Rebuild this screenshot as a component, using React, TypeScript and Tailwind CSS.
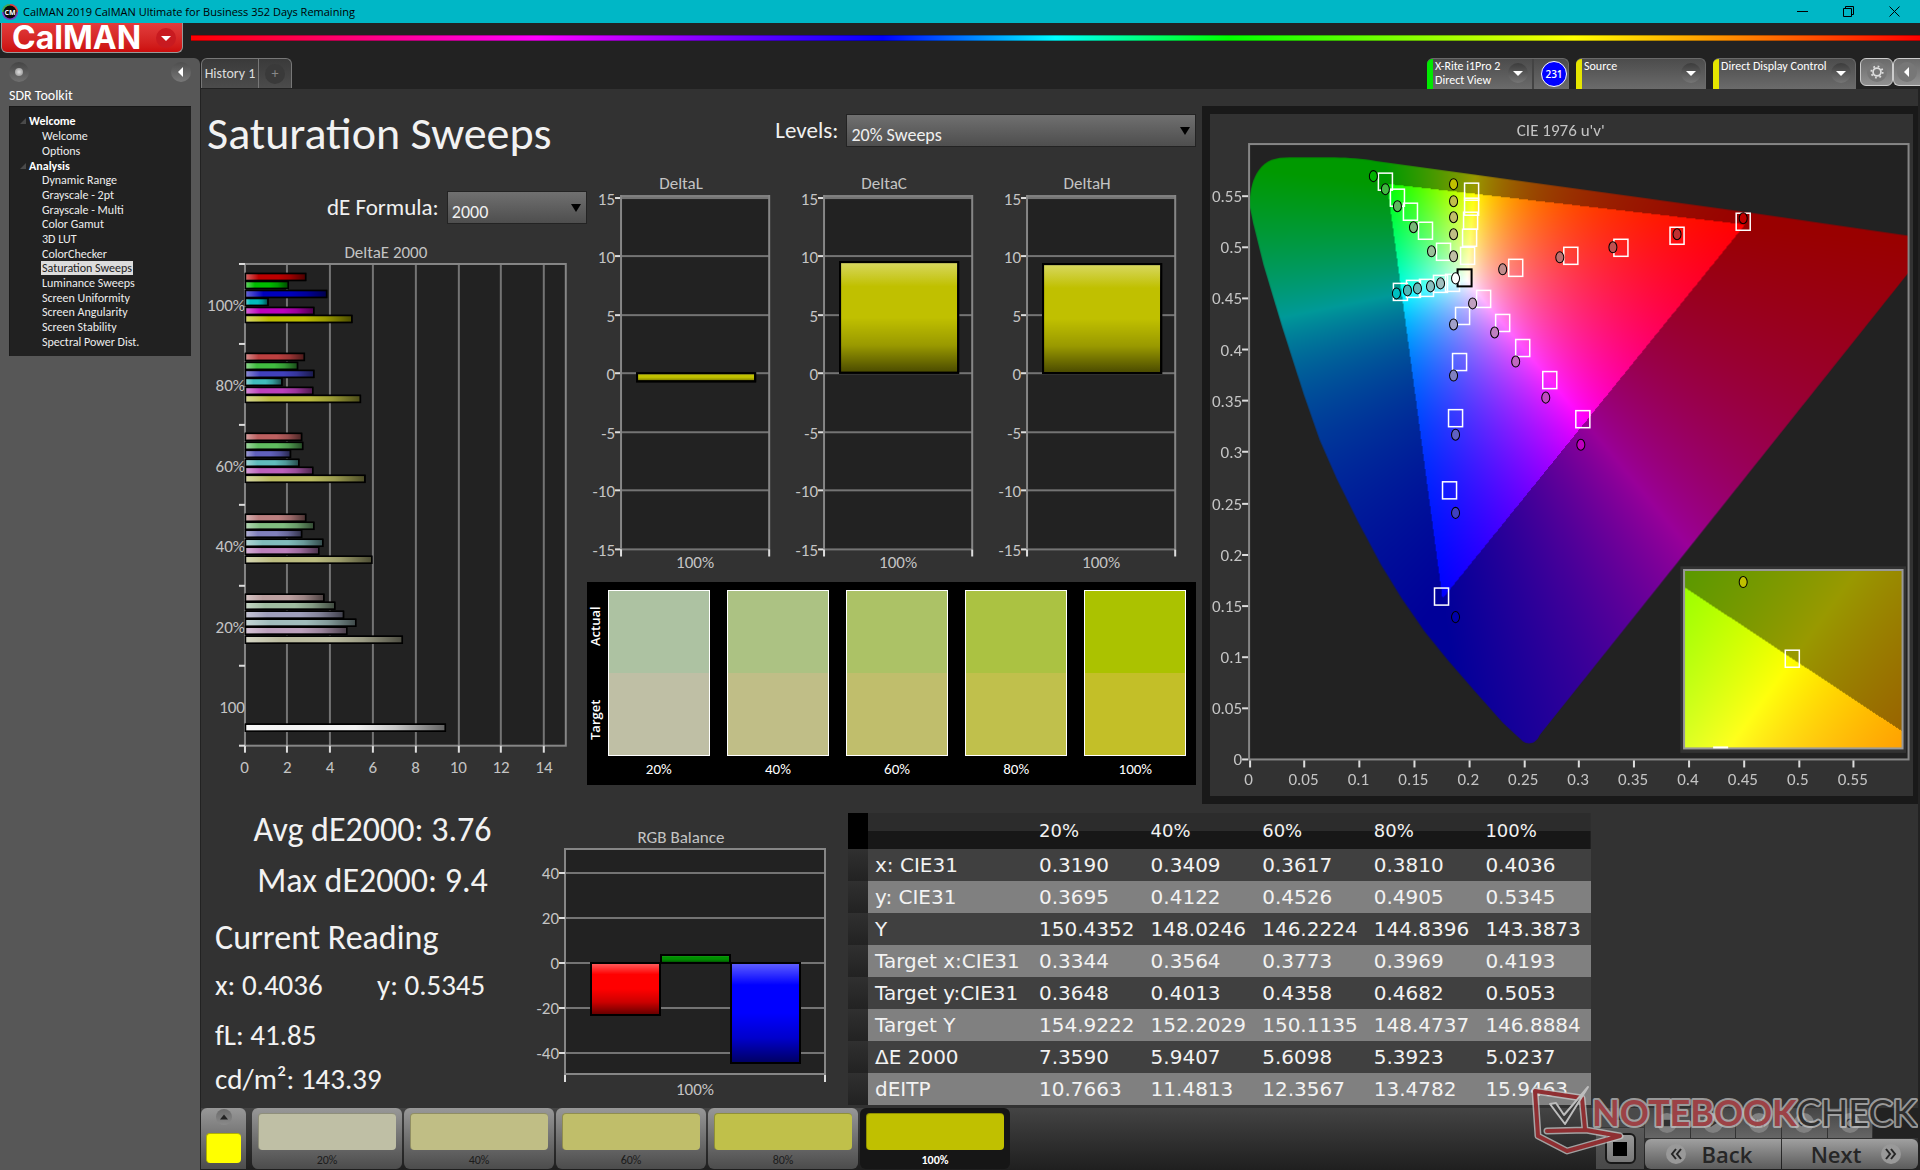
import React, { useLayoutEffect, useRef } from "react";

const SWEEPS = ["20%", "40%", "60%", "80%", "100%"];

const TREE: { title: string; items: string[] }[] = [
  { title: "Welcome", items: ["Welcome", "Options"] },
  {
    title: "Analysis",
    items: [
      "Dynamic Range",
      "Grayscale - 2pt",
      "Grayscale - Multi",
      "Color Gamut",
      "3D LUT",
      "ColorChecker",
      "Saturation Sweeps",
      "Luminance Sweeps",
      "Screen Uniformity",
      "Screen Angularity",
      "Screen Stability",
      "Spectral Power Dist.",
    ],
  },
];

const ROWS: [string, string[]][] = [
  ["x: CIE31", ["0.3190", "0.3409", "0.3617", "0.3810", "0.4036"]],
  ["y: CIE31", ["0.3695", "0.4122", "0.4526", "0.4905", "0.5345"]],
  ["Y", ["150.4352", "148.0246", "146.2224", "144.8396", "143.3873"]],
  ["Target x:CIE31", ["0.3344", "0.3564", "0.3773", "0.3969", "0.4193"]],
  ["Target y:CIE31", ["0.3648", "0.4013", "0.4358", "0.4682", "0.5053"]],
  ["Target Y", ["154.9222", "152.2029", "150.1135", "148.4737", "146.8884"]],
  ["ΔE 2000", ["7.3590", "5.9407", "5.6098", "5.3923", "5.0237"]],
  ["dEITP", ["10.7663", "11.4813", "12.3567", "13.4782", "15.9463"]],
];

/* ---------- small controls ---------- */

function Caret({ dir = "down", className = "" }: { dir?: "down" | "left" | "up"; className?: string }) {
  const d = dir === "down" ? "M5 8h10l-5 5z" : dir === "left" ? "M12 5v10l-5-5z" : "M5 12h10l-5-5z";
  return (
    <span className={"flex size-5 shrink-0 items-center justify-center rounded-full " + className}>
      <svg viewBox="0 0 20 20" className="size-5" fill="currentColor">
        <path d={d} />
      </svg>
    </span>
  );
}

function Select({ id, value, className }: { id: string; value: string; className: string }) {
  return (
    <span className={"relative block h-[33px] " + className}>
      <select
        id={id}
        defaultValue={value}
        className="h-full w-full appearance-none border border-[#232323] bg-linear-to-b from-[#707070] to-[#4e4e4e] pt-2 pl-1 text-[18px] leading-6 text-[#f0f0f0]"
      >
        <option>{value}</option>
      </select>
      <svg viewBox="0 0 10 8" className="pointer-events-none absolute top-[13px] right-1.5 h-2 w-2.5">
        <path d="M0 0h10L5 8z" fill="#000" />
      </svg>
    </span>
  );
}

function Device({ lines, color, badge, className }: { lines: string[]; color: string; badge?: string; className: string }) {
  return (
    <div className={"flex h-[31px] overflow-hidden rounded-t-md border-t border-r border-[#6a6a6a] bg-linear-to-b from-[#4c4c4c] to-[#6b6b6b] " + className}>
      <span className={"w-1.5 shrink-0 " + color} />
      <button className="flex flex-1 items-start justify-between pr-1 pl-0.5 text-left text-[12px] leading-[14px] text-white">
        <span className="whitespace-nowrap">
          {lines.map((l) => (
            <span key={l} className="block">
              {l}
            </span>
          ))}
        </span>
        <Caret className="mt-1 bg-linear-to-b from-[#3c3c3c] to-[#757575]" />
      </button>
      {badge && (
        <span className="flex w-9 shrink-0 items-center justify-end border-l-2 border-[#444] pr-px">
          <button className="size-[26px] rounded-full border border-white bg-[#0000ff] font-['Open_Sans'] text-[10px] font-semibold text-white">{badge}</button>
        </span>
      )}
    </div>
  );
}

/* ---------- charts ---------- */

const label = "fill-[#c4c4c4] text-[17px]";

function Shades() {
  return (
    <defs>
      <linearGradient id="sheen-h">
        <stop offset="0" stopColor="#fff" stopOpacity="0.4" />
        <stop offset="0.22" stopColor="#fff" stopOpacity="0" />
        <stop offset="0.55" stopColor="#000" stopOpacity="0" />
        <stop offset="0.75" stopColor="#000" stopOpacity="0.18" />
        <stop offset="1" stopColor="#000" stopOpacity="0.6" />
      </linearGradient>
      <linearGradient id="sheen-v" x2="0" y2="1">
        <stop offset="0" stopColor="#fff" stopOpacity="0.38" />
        <stop offset="0.22" stopColor="#fff" stopOpacity="0" />
        <stop offset="0.5" stopColor="#000" stopOpacity="0" />
        <stop offset="0.75" stopColor="#000" stopOpacity="0.2" />
        <stop offset="1" stopColor="#000" stopOpacity="0.62" />
      </linearGradient>
    </defs>
  );
}

const lows = [0, 64, 96, 128, 160];
const hues = [
  [1, 0, 0],
  [0, 1, 0],
  [0, 0, 1],
  [0, 1, 1],
  [1, 0, 1],
  [1, 1, 0],
];
const deltaE: { name: string; values: number[] }[] = [
  { name: "100%", values: [2.86, 2.05, 3.84, 1.1, 3.24, 5.02] },
  { name: "80%", values: [2.8, 2.48, 3.24, 1.75, 3.19, 5.42] },
  { name: "60%", values: [2.67, 2.72, 2.15, 2.54, 3.19, 5.63] },
  { name: "40%", values: [2.86, 3.24, 2.67, 3.66, 3.47, 5.95] },
  { name: "20%", values: [3.71, 4.22, 4.63, 5.2, 4.78, 7.38] },
];
const UNIT = 21.4;
const BAND = 80.4;

function DeltaEChart() {
  return (
    <svg viewBox="201 240 386 540" className="mt-4 block w-full" role="img" aria-label="DeltaE 2000">
      <Shades />
      <text x="386" y="258" textAnchor="middle" className={label}>
        DeltaE 2000
      </text>
      <rect x="245" y="264" width="321" height="482" fill="#222" />
      {[2, 4, 6, 8, 10, 12, 14].map((v) => (
        <rect key={v} x={Math.round(244.5 + v * UNIT) - 1} y="264" width="2" height="482" fill="#747474" />
      ))}
      <rect x="245" y="264" width="321" height="482" fill="none" stroke="#868686" strokeWidth="2" />
      {[0, 1, 2, 3, 4, 5, 6].map((i) => (
        <rect key={i} x="239" y={Math.round(263 + i * BAND)} width="6" height="2" fill="#ddd" />
      ))}
      {[0, 2, 4, 6, 8, 10, 12, 14].map((v) => (
        <g key={v}>
          <rect x={Math.round(244.5 + v * UNIT) - 1} y="746" width="2" height="7" fill="#ddd" />
          <text x={244.5 + v * UNIT} y="773" textAnchor="middle" className={label}>
            {v}
          </text>
        </g>
      ))}
      {[...deltaE.map((d) => d.name), "100"].map((n, i) => (
        <text key={n} x="245" y={Math.round(311 + i * BAND)} textAnchor="end" className={label}>
          {n}
        </text>
      ))}
      {deltaE.map((d, g) =>
        d.values.map((v, k) => {
          const y = Math.round(273 + g * 80.2 + k * 8.4) + 0.5;
          const fill = `rgb(${hues[k].map((h) => (h ? 188 : lows[g])).join(",")})`;
          return (
            <g key={g + "-" + k} stroke="#000" strokeWidth="1.4">
              <rect x="245.5" y={y} width={v * UNIT - 1} height="7" fill={fill} />
              <rect x="245.5" y={y} width={v * UNIT - 1} height="7" fill="url(#sheen-h)" />
            </g>
          );
        }),
      )}
      <g stroke="#000" strokeWidth="1.4">
        <rect x="245.5" y="724.5" width="200" height="7" fill="#f2f2f2" />
        <rect x="245.5" y="724.5" width="200" height="7" fill="url(#sheen-h)" />
      </g>
    </svg>
  );
}

function SignedChart({ title, value }: { title: string; value: number }) {
  const y = (v: number) => Math.round(373 - v * 11.7);
  return (
    <svg viewBox="587 170 203 402" className="block w-full" role="img" aria-label={title}>
      <text x="681" y="189" textAnchor="middle" className={label}>
        {title}
      </text>
      <rect x="621" y="196" width="148" height="353" fill="#222" />
      <rect x="621" y="195" width="148" height="4" fill="#808080" />
      {[15, 10, 5, 0, -5, -10, -15].map((v) => (
        <g key={v}>
          <rect x="621" y={y(v) - 1} width="148" height="2" fill="#747474" />
          <rect x="615" y={y(v) - 1} width="6" height="2" fill="#ddd" />
          <text x="615" y={y(v) + 7} textAnchor="end" className={label}>
            {v}
          </text>
        </g>
      ))}
      <path d="M621 195V549M769 195V549" stroke="#868686" strokeWidth="2" />
      <path d="M621 549v7M769 549v7" stroke="#ddd" strokeWidth="2" />
      <g stroke="#000" strokeWidth="2">
        <rect x="637" y={Math.min(y(value), 373)} width="118" height={Math.abs(value * 11.7)} fill="#c0c000" />
        <rect x="637" y={Math.min(y(value), 373)} width="118" height={Math.abs(value * 11.7)} fill="url(#sheen-v)" />
      </g>
      <text x="695" y="568" textAnchor="middle" className={label}>
        100%
      </text>
    </svg>
  );
}

function RgbChart() {
  const y = (v: number) => Math.round(964 - v * 2.25);
  const bars = [
    { x: 591, top: 964, h: 52, fill: "#ff0000" },
    { x: 661, top: 956, h: 8, fill: "#009000" },
    { x: 731, top: 964, h: 100, fill: "#0000ff" },
  ];
  return (
    <svg viewBox="530 815 318 290" className="block w-full" role="img" aria-label="RGB Balance">
      <text x="681" y="844" textAnchor="middle" className={label}>
        RGB Balance
      </text>
      <rect x="565" y="850" width="260" height="225" fill="#222" stroke="#868686" strokeWidth="2" />
      {[40, 20, 0, -20, -40].map((v) => (
        <g key={v}>
          <rect x="566" y={y(v) - 1} width="258" height="2" fill="#747474" />
          <rect x="559" y={y(v) - 1} width="6" height="2" fill="#ddd" />
          <text x="559" y={y(v) + 6} textAnchor="end" className={label}>
            {v}
          </text>
        </g>
      ))}
      <path d="M565 1076v7M825 1076v7" stroke="#ddd" strokeWidth="2" />
      {bars.map((b) => (
        <g key={b.x} stroke="#000" strokeWidth="2">
          <rect x={b.x} y={b.top} width="69" height={b.h} fill={b.fill} />
          <rect x={b.x} y={b.top} width="69" height={b.h} fill="url(#sheen-v)" />
        </g>
      ))}
      <text x="695" y="1096" textAnchor="middle" className={label}>
        100%
      </text>
    </svg>
  );
}

/* ---------- chromaticity diagram ---------- */

const HULL =
  "M1250.5 205C1251 188 1254 178 1259.7 170C1267 160 1276 157.3 1290 157.3L1335 157.3C1350 157.6 1362 158.5 1376.8 161L1745 211.7L1908 235.4V271.5L1682 555L1539.8 733C1536 742.5 1528 743 1523 739.5L1503 721L1475.5 690L1447.9 658.3L1425 630L1402 596.7L1381.4 563.3L1358.4 520L1337.7 478.3L1320.8 440L1304.7 394L1282.6 325L1264.3 264L1254.2 223.3Z";

function chroma(x: number, y: number): [number, number, number] {
  const X = x / y;
  const Z = (1 - x - y) / y;
  const lin = [3.2406 * X - 1.5372 - 0.4986 * Z, -0.9689 * X + 1.8758 + 0.0415 * Z, 0.0557 * X - 0.204 + 1.057 * Z];
  const dim = Math.min(...lin) < 0 ? 0.6 : 1;
  const max = Math.max(...lin);
  return lin.map((c) => (255 * dim * Math.max(0, c)) / max) as [number, number, number];
}

function paint(w: number, h: number, toXy: (px: number, py: number) => [number, number]) {
  const c = document.createElement("canvas");
  c.width = w;
  c.height = h;
  const g = c.getContext("2d")!;
  const img = g.createImageData(w, h);
  for (let j = 0; j < h; j++)
    for (let i = 0; i < w; i++) {
      const [x, y] = toXy(i, j);
      const rgb = y > 0 ? chroma(x, y) : [0, 0, 0];
      const o = (j * w + i) * 4;
      img.data[o] = rgb[0];
      img.data[o + 1] = rgb[1];
      img.data[o + 2] = rgb[2];
      img.data[o + 3] = 255;
    }
  g.putImageData(img, 0, 0);
  return c;
}

type Pt = [number, number];
const TARGETS: Pt[] = [
  [1386, 181], [1398, 197], [1411, 211], [1426, 230], [1444, 251],
  [1472, 191], [1472, 206], [1471, 220], [1470, 237], [1468, 255],
  [1516, 267], [1571, 255], [1621, 247], [1677, 235], [1743, 221],
  [1484, 298], [1503, 322], [1523, 347], [1550, 379], [1583, 418],
  [1463, 315], [1460, 361], [1456, 417], [1450, 489], [1442, 595],
  [1401, 291], [1414, 288], [1427, 287], [1441, 283], [1453, 282],
];
const ACTUALS: [number, number, string][] = [
  [1374, 176, "#00b400"], [1386, 189, "#40b840"], [1398, 206, "#5fb85f"], [1414, 227, "#78b878"], [1432, 251, "#98c098"],
  [1454, 184, "#c0c000"], [1454, 201, "#c0c04a"], [1454, 217, "#c0be6a"], [1454, 234, "#c0be85"], [1454, 256, "#bfbfa5"],
  [1503, 269, "#c08c8c"], [1560, 257, "#bc7070"], [1613, 247, "#c05050"], [1677, 234, "#c03030"], [1743, 218, "#c00000"],
  [1473, 303, "#c0a0c0"], [1495, 332, "#c080c0"], [1516, 361, "#c068c0"], [1546, 397, "#c048c0"], [1581, 444, "#c000c0"],
  [1454, 324, "#a0a0c8"], [1454, 375, "#8080c0"], [1456, 434, "#6060c0"], [1456, 512, "#4040c0"], [1456, 616, "#0000a8"],
  [1397, 293, "#00c0c0"], [1408, 290, "#50b8b8"], [1418, 288, "#68b8b8"], [1431, 286, "#88c0c0"], [1441, 283, "#a0c0c0"],
  [1456, 278, "#ffffff"],
];

function CiePanel() {
  const ref = useRef<HTMLCanvasElement>(null);
  useLayoutEffect(() => {
    const g = ref.current!.getContext("2d")!;
    g.setTransform(1, 0, 0, 1, 0, 0);
    g.clearRect(0, 0, 701, 680);
    g.translate(-1211, -114);
    g.fillStyle = "#222";
    g.fillRect(1250, 144, 658, 614);
    const diagram = paint(658, 614, (i, j) => {
      const u = i / 1096;
      const v = (614 - j) / 1022;
      const d = 6 * u - 16 * v + 12;
      return [(9 * u) / d, (4 * v) / d];
    });
    g.save();
    g.clip(new Path2D(HULL));
    g.drawImage(diagram, 1250, 144);
    g.restore();
    g.fillStyle = "#323232";
    g.fillRect(1680, 565, 225, 186);
    const detail = paint(218, 178, (i, j) => [0.4193 + (i - 108) / 3121, 0.5053 - (j - 88) / 2603]);
    g.drawImage(detail, 1684, 569);
  }, []);
  const us = ["0", "0.05", "0.1", "0.15", "0.2", "0.25", "0.3", "0.35", "0.4", "0.45", "0.5", "0.55"];
  return (
    <section className="mt-[17px] border-y-8 border-r-[5px] border-l-8 border-[#191919] bg-[#323232]">
      <div className="relative">
        <canvas ref={ref} width={701} height={680} className="block w-full" />
        <svg viewBox="1211 114 701 680" className="absolute inset-0 h-full w-full" role="img" aria-label="CIE 1976 u'v'">
          <text x="1561" y="136" textAnchor="middle" className={label}>
            CIE 1976 u'v'
          </text>
          <rect x="1250" y="144" width="658" height="614" fill="none" stroke="#868686" strokeWidth="2" />
          {us.map((t, i) => (
            <g key={t}>
              <rect x={Math.round(1249.5 + i * 54.8)} y="759" width="2" height="7" fill="#ddd" />
              <text x={1249.5 + i * 54.8} y="784" textAnchor="middle" className={label}>
                {t}
              </text>
              <rect x="1243" y={Math.round(757 - i * 51.1)} width="6" height="2" fill="#ddd" />
              <text x="1243" y={Math.round(764 - i * 51.1)} textAnchor="end" className={label}>
                {t}
              </text>
            </g>
          ))}
          <g fill="none" stroke="#fff" strokeWidth="1.5">
            {TARGETS.map(([x, y], i) => (
              <rect key={i} x={x - 7} y={y - 8} width="14" height="17" />
            ))}
            <rect x="1458" y="269" width="14" height="17" stroke="#000" strokeWidth="2" />
          </g>
          <g stroke="#000" strokeWidth="1">
            {ACTUALS.map(([x, y, f], i) => (
              <ellipse key={i} cx={x} cy={y} rx="4" ry="5.5" fill={f} />
            ))}
          </g>
          <rect x="1684" y="569" width="218" height="178" fill="none" stroke="#999" strokeWidth="2" />
          <rect x="1785" y="649" width="14" height="17" fill="none" stroke="#fff" strokeWidth="1.5" />
          <rect x="1713" y="745" width="15" height="2" fill="#fff" />
          <ellipse cx="1743" cy="581" rx="4" ry="5.5" fill="#c0c000" stroke="#000" />
        </svg>
      </div>
    </section>
  );
}

function Swatches() {
  const actual = ["bg-[#adc2a2]", "bg-[#acc283]", "bg-[#acc266]", "bg-[#abc242]", "bg-[#abc200]"];
  const target = ["bg-[#bfbfa5]", "bg-[#c0be87]", "bg-[#c0be6c]", "bg-[#c0c04c]", "bg-[#c3bf28]"];
  return (
    <section className="mt-2.5 flex bg-black pt-2 pr-2.5 text-[15px] text-white">
      <div className="flex h-[166px] w-[21px] shrink-0 rotate-180 items-start justify-between pt-4 pb-4 font-['Open_Sans'] text-[13px] leading-[17px] font-semibold [writing-mode:vertical-rl]">
        <span>Target</span>
        <span>Actual</span>
      </div>
      <div className="grid flex-1 grid-cols-5 gap-[17px]">
        {SWEEPS.map((s, i) => (
          <figure key={s}>
            <div className="flex h-[166px] flex-col border border-white">
              <div className={"flex-1 " + actual[i]} />
              <div className={"flex-1 " + target[i]} />
            </div>
            <figcaption className="h-[29px] text-center leading-[27px]">{s}</figcaption>
          </figure>
        ))}
      </div>
    </section>
  );
}

function DataTable() {
  return (
    <table className="mt-[9px] w-full table-fixed border-collapse self-start font-['DejaVu_Sans'] text-[20px] leading-8 text-[#f2f2f2]">
      <colgroup>
        <col className="w-5" />
        <col className="w-[165px]" />
        <col />
        <col />
        <col />
        <col />
        <col />
      </colgroup>
      <thead>
        <tr className="h-9 bg-linear-to-b from-[#2c2c2c] from-50% to-[#171717] to-50%">
          <th className="bg-black" />
          <th />
          {SWEEPS.map((s) => (
            <th key={s} scope="col" className="p-0 pl-1.5 text-left text-[18px] font-normal">
              {s}
            </th>
          ))}
        </tr>
      </thead>
      <tbody>
        {ROWS.map(([name, vals], i) => (
          <tr key={name} className={i % 2 ? "h-8 bg-[#808080]" : "h-8 bg-[#404040]"}>
            <td className="bg-linear-to-b from-[#303030] to-[#222] p-0" />
            <th scope="row" className="p-0 pl-[7px] text-left font-normal whitespace-nowrap">
              {name}
            </th>
            {vals.map((v) => (
              <td key={v} className="p-0 pl-1.5">
                {v}
              </td>
            ))}
          </tr>
        ))}
      </tbody>
    </table>
  );
}

function Watermark() {
  return (
    <svg viewBox="1530 1080 390 80" className="pointer-events-none absolute right-0 bottom-2.5 h-20 w-[390px]">
      <g fill="none" strokeLinejoin="round" strokeLinecap="round">
        <path d="M1587 1129L1584 1098L1537 1091L1540 1136L1569 1151L1622 1136L1588 1130L1549 1131" stroke="#c8c8c8" strokeWidth="7" opacity="0.75" />
        <path d="M1587 1129L1584 1098L1537 1091L1540 1136L1569 1151L1622 1136L1588 1130L1549 1131" stroke="#8f2f32" strokeWidth="4" />
        <path d="M1552 1104L1558 1103L1566 1115L1590 1087L1567 1124Z" fill="#3a3a3a" stroke="#bdbdbd" strokeWidth="2" />
      </g>
      <text
        x="1594"
        y="1126"
        strokeWidth="4"
        paintOrder="stroke"
        strokeLinejoin="round"
        className="fill-[#9c4246] stroke-[#c8c8c8]/70 font-['Lato'] text-[36px] font-bold"
      >
        NOTEBOOK
        <tspan className="fill-[#2e2e2e] font-normal">CHECK</tspan>
      </text>
    </svg>
  );
}

function BottomBar() {
  const fills = ["bg-[#bfbfa5]", "bg-[#c0be85]", "bg-[#c0be6a]", "bg-[#c0c04a]", "bg-[#c0c000]"];
  const transport = [
    <path key="s" d="M6 6h8v8H6z" />,
    <path key="p" d="M7 5l8 5-8 5z" />,
    <path key="f" d="M5 5h2v10H5zM9 6h3v8H9zM14 5h2v10h-2z" />,
    <path key="i" d="M4 10c2-4 4-4 6 0s4 4 6 0c-2-4-4-4-6 0s-4 4-6 0z" fill="none" stroke="currentColor" strokeWidth="2" />,
    <path key="r" d="M14 7a5 5 0 1 0 1 5M15 4v4h-4" fill="none" stroke="currentColor" strokeWidth="2" />,
  ];
  return (
    <footer className="relative mt-auto flex h-[62px] items-start bg-linear-to-b from-[#444] to-[#1f1f1f]">
      <button aria-label="Show pattern" className="flex h-[61px] w-[45px] flex-col items-center justify-between rounded-t-md bg-linear-to-b from-[#989898] to-[#4c4c4c] pt-px pb-1.5 text-[#222]">
        <span className="flex size-4 items-center justify-center rounded-full bg-linear-to-b from-[#6a6a6a] to-[#8a8a8a]">
          <svg viewBox="0 0 10 6" className="h-1.5 w-2" fill="currentColor">
            <path d="M0 6h10L5 0z" />
          </svg>
        </span>
        <span className="h-[30px] w-[35px] rounded-sm border-t border-l border-[#b0b000] bg-[#ffff00]" />
      </button>
      <div className="ml-1.5 flex gap-0.5">
        {SWEEPS.map((s, i) => (
          <button
            key={s}
            className={
              i === 4
                ? "h-[61px] w-[150px] rounded-md bg-[#161616] px-1.5 pt-[5px] text-[12px] font-bold text-white"
                : "h-[61px] w-[150px] rounded-md bg-linear-to-b from-[#989898] to-[#4c4c4c] px-1.5 pt-[5px] text-[12px] text-[#1c1c1c]"
            }
          >
            <span className={"block h-[37px] rounded-sm border-t border-l border-black/25 " + fills[i]} />
            <span className="block h-5 leading-5">{s}</span>
          </button>
        ))}
      </div>
      <div className="ml-auto flex h-[61px] gap-px">
        <div className="flex w-12 flex-col gap-px">
          <button aria-label="Collapse" className="flex h-[19px] items-center justify-center bg-[#4a4a4a] text-[#222]">
            <Caret dir="up" />
          </button>
          <button aria-label="Stop" className="flex flex-1 items-center justify-center bg-linear-to-b from-[#5a5a5a] to-[#484848]">
            <span className="flex size-[31px] items-center justify-center rounded-md border-2 border-[#181818] bg-linear-to-b from-[#999] to-[#777]">
              <span className="size-3.5 bg-black" />
            </span>
          </button>
        </div>
        <div className="flex w-[273px] flex-col gap-px">
          <div className="grid h-[30px] grid-cols-6 gap-px">
            {transport.map((p, i) => (
              <button key={i} aria-label={"Transport " + (i + 1)} className="flex items-center justify-center bg-linear-to-b from-[#454545] to-[#666]">
                <span className="flex size-5 items-center justify-center rounded-full bg-[#808080] text-[#303030]">
                  <svg viewBox="0 0 20 20" className="size-4" fill="currentColor">
                    {p}
                  </svg>
                </span>
              </button>
            ))}
            <span className="bg-[#222]" />
          </div>
          <div className="grid flex-1 grid-cols-2 gap-px font-['Open_Sans'] text-[22px] leading-none font-semibold text-[#262626]">
            <button className="flex items-center justify-center gap-4 rounded-l-md bg-linear-to-b from-[#a0a0a0] to-[#5c5c5c] pr-2">
              <span className="flex size-5 items-center justify-center rounded-full bg-[#999]">
                <svg viewBox="0 0 12 12" className="size-3" fill="none" stroke="currentColor" strokeWidth="2">
                  <path d="M6 1L2 6l4 5M11 1L7 6l4 5" />
                </svg>
              </span>
              Back
            </button>
            <button className="flex items-center justify-center gap-5 rounded-r-md bg-linear-to-b from-[#a0a0a0] to-[#5c5c5c] pl-3">
              Next
              <span className="flex size-5 items-center justify-center rounded-full bg-[#999]">
                <svg viewBox="0 0 12 12" className="size-3" fill="none" stroke="currentColor" strokeWidth="2">
                  <path d="M1 1l4 5-4 5M6 1l4 5-4 5" />
                </svg>
              </span>
            </button>
          </div>
        </div>
      </div>
      <Watermark />
    </footer>
  );
}

function Sidebar() {
  return (
    <aside className="w-[200px] shrink-0 rounded-tr-md bg-[#575757] px-[9px] pt-1">
      <div className="flex items-center justify-between">
        <button aria-label="Record" className="flex size-5 items-center justify-center rounded-full bg-linear-to-b from-[#454545] to-[#707070]">
          <span className="size-2 rounded-full bg-radial from-[#e0e0e0] to-[#888]" />
        </button>
        <button aria-label="Collapse sidebar" className="text-white">
          <Caret dir="left" className="bg-linear-to-b from-[#4e4e4e] to-[#787878]" />
        </button>
      </div>
      <h2 className="mt-1 text-[14px] leading-5 text-white">SDR Toolkit</h2>
      <nav className="h-[250px] border-t border-l border-[#191919] bg-[#212121] pt-1.5 pl-2.5 text-[12px] leading-none text-[#eee]">
        {TREE.map((g) => (
          <section key={g.title}>
            <h3 className="flex h-[15px] items-center gap-[3px] font-bold text-white">
              <svg viewBox="0 0 6 6" className="size-1.5" fill="#4a4a4a">
                <path d="M6 0v6H0z" />
              </svg>
              {g.title}
            </h3>
            <ul className={g.items.length > 2 ? "grid h-[176px] auto-rows-fr pl-[22px]" : "grid h-[30px] auto-rows-fr pl-[22px]"}>
              {g.items.map((t) => (
                <li key={t} className="flex items-center">
                  <a
                    href="#"
                    className={t === "Saturation Sweeps" ? "-ml-px bg-[#dcdcdc] px-px leading-[14px] text-[#222]" : "leading-[14px]"}
                  >
                    {t}
                  </a>
                </li>
              ))}
            </ul>
          </section>
        ))}
      </nav>
    </aside>
  );
}

export default function App() {
  return (
    <div className="flex min-h-screen flex-col bg-[#222] font-['Carlito','Lato',sans-serif] text-white">
      <header>
        <div className="flex h-[23px] items-center bg-[#00b7c6] pl-0.5 text-black">
          <svg viewBox="0 0 16 16" className="size-4">
            <circle cx="8" cy="8" r="8" fill="#7a3fc0" />
            <path d="M8 0a8 8 0 0 1 8 8H8z" fill="#e0463c" />
            <path d="M0 8a8 8 0 0 1 8-8v8z" fill="#3db54a" />
            <circle cx="8" cy="8" r="6.5" fill="#0a0a0a" />
            <text x="8" y="10.5" textAnchor="middle" className="fill-white font-['Open_Sans'] text-[7px] font-bold">
              CM
            </text>
          </svg>
          <h1 className="ml-[5px] font-['Open_Sans'] text-[11px] leading-none">CalMAN 2019 CalMAN Ultimate for Business 352 Days Remaining</h1>
          <div className="ml-auto flex items-center gap-[35px] pr-5">
            <button aria-label="Minimize">
              <svg viewBox="0 0 11 11" className="size-[11px]" stroke="currentColor" fill="none">
                <path d="M0 5.5h11" />
              </svg>
            </button>
            <button aria-label="Restore">
              <svg viewBox="0 0 11 11" className="size-[11px]" stroke="currentColor" fill="none">
                <path d="M.5 2.5h8v8h-8zM2.5 2.5v-2h8v8h-2" />
              </svg>
            </button>
            <button aria-label="Close">
              <svg viewBox="0 0 11 11" className="size-[11px]" stroke="currentColor" fill="none">
                <path d="M.5 .5l10 10M10.5 .5l-10 10" />
              </svg>
            </button>
          </div>
        </div>
        <div className="flex h-[35px] items-start gap-2">
          <button className="ml-px flex h-[30px] w-[182px] items-center justify-between rounded-b-md border-x border-b border-[#999] bg-linear-to-b from-[#e23c3c] to-[#cc0c0c] pr-1.5 pl-2.5 font-['Inter'] text-[32px] leading-none font-bold text-white">
            CalMAN
            <Caret className="bg-[#c81a20]" />
          </button>
          <div className="mt-3 h-1.5 flex-1 border-y border-black/30 bg-[linear-gradient(90deg,#ff0000,#ff00ff_20%,#0000ff_40%,#00ffff_50%,#00ff00_60%,#ffff00_80%,#ff0000)]" />
        </div>
      </header>

      <div className="flex flex-1">
        <Sidebar />
        <div className="ml-px flex min-w-0 flex-1 flex-col pr-0.5">
          <div className="flex h-[31px] items-start">
            <div role="tablist" className="flex h-[30px] rounded-t-md border-x border-t border-[#777] bg-linear-to-b from-[#3a3a3a] to-[#4c4c4c] text-[14px]">
              <button role="tab" aria-selected="true" className="w-[57px] border-r border-[#777] text-[#ddd]">
                History 1
              </button>
              <button aria-label="Add history" className="flex w-8 items-center justify-center">
                <span className="flex size-5 items-center justify-center rounded-full bg-[#3a3a3a] leading-none text-[#888]">+</span>
              </button>
            </div>
            <div className="ml-auto flex gap-[7px]">
              <Device lines={["X-Rite i1Pro 2", "Direct View"]} color="bg-[#00e800]" badge="231" className="w-[142px]" />
              <Device lines={["Source"]} color="bg-[#e6e600]" className="w-[130px]" />
              <Device lines={["Direct Display Control"]} color="bg-[#e6e600]" className="w-[143px]" />
            </div>
            <button aria-label="Settings" className="ml-1 flex h-7 w-[33px] items-center justify-center rounded-md border border-[#ccc] bg-linear-to-b from-[#6a6a6a] to-[#909090]">
              <span className="flex size-5 items-center justify-center rounded-full bg-[#777]">
                <svg viewBox="0 0 16 16" className="size-3.5" fill="none" stroke="#ddd">
                  <circle cx="8" cy="8" r="4.5" strokeWidth="2" />
                  <circle cx="8" cy="8" r="6.5" strokeWidth="2" strokeDasharray="2 3.1" />
                </svg>
              </span>
            </button>
            <button aria-label="Collapse panel" className="-mr-0.5 flex h-7 w-[27px] items-center justify-center rounded-l-md border-y border-l border-[#ccc] bg-linear-to-b from-[#6a6a6a] to-[#909090]">
              <Caret dir="left" className="bg-[#777]" />
            </button>
          </div>

          <main className="flex flex-1 flex-col bg-[#323232]">
            <div className="grid grid-cols-[386fr_616fr_716fr]">
              <section>
                <h2 className="flex h-[88px] items-center pl-1.5 text-[46px] leading-none whitespace-nowrap text-[#f2f2f2]">Saturation Sweeps</h2>
                <div className="mt-3.5 flex items-center justify-end gap-2">
                  <label htmlFor="formula" className="text-[23px] leading-none text-[#f0f0f0]">
                    dE Formula:
                  </label>
                  <Select id="formula" value="2000" className="w-[140px]" />
                </div>
                <DeltaEChart />
              </section>
              <section className="pr-1.5">
                <div className="mt-[25px] flex items-center justify-end gap-2">
                  <label htmlFor="levels" className="text-[23px] leading-none text-[#f0f0f0]">
                    Levels:
                  </label>
                  <Select id="levels" value="20% Sweeps" className="w-[350px]" />
                </div>
                <div className="mt-[23px] grid grid-cols-3">
                  <SignedChart title="DeltaL" value={-0.7} />
                  <SignedChart title="DeltaC" value={9.45} />
                  <SignedChart title="DeltaH" value={9.3} />
                </div>
                <Swatches />
              </section>
              <CiePanel />
            </div>

            <div className="grid grid-cols-[329fr_318fr_743fr_327fr]">
              <section className="pl-3.5 text-[29px] leading-none whitespace-nowrap text-[#f2f2f2]">
                <p className="flex h-[52px] items-center justify-center text-[34px]">Avg dE2000: 3.76</p>
                <p className="flex h-[50px] items-center justify-center text-[34px]">Max dE2000: 9.4</p>
                <h3 className="flex h-16 items-center text-[34px]">Current Reading</h3>
                <div className="flex h-8 items-center">
                  <p className="w-[162px]">x: 0.4036</p>
                  <p>y: 0.5345</p>
                </div>
                <p className="flex h-[68px] items-center">fL: 41.85</p>
                <p className="flex h-5 items-center">cd/m²: 143.39</p>
              </section>
              <div className="pt-2.5">
                <RgbChart />
              </div>
              <DataTable />
            </div>
            <BottomBar />
          </main>
        </div>
      </div>
    </div>
  );
}
